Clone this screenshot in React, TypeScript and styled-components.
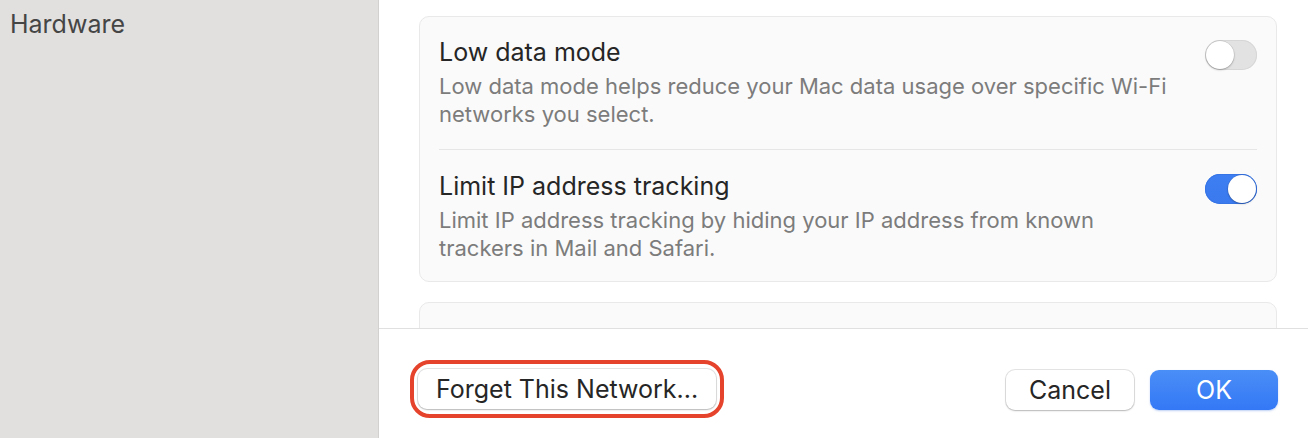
import styled, { createGlobalStyle } from "styled-components";

const GlobalStyle = createGlobalStyle`
  html, body {
    margin: 0;
    padding: 0;
    height: 438px;
    overflow: hidden;
    background: #ffffff;
    font-family: Inter, "Noto Sans", "Liberation Sans", sans-serif;
    -webkit-font-smoothing: antialiased;
  }
`;

const Window = styled.div`
  display: flex;
  width: 1308px;
  height: 438px;
`;

const Sidebar = styled.aside`
  width: 379px;
  flex-shrink: 0;
  background: #e1e0df;
  border-right: 1px solid #d2d1d0;
  padding: 9px 0 0 10px;
  box-sizing: border-box;
`;

const SidebarItem = styled.div`
  font-size: 25px;
  line-height: 30px;
  color: #454545;
`;

const Main = styled.main`
  flex: 1;
  display: flex;
  flex-direction: column;
  background: #ffffff;
  min-width: 0;
`;

const Scroll = styled.div`
  flex: 1;
  overflow: hidden;
  padding: 16px 31px 0 40px;
  display: flex;
  flex-direction: column;
  gap: 20px;
`;

const Card = styled.section`
  background: #fafafa;
  border: 1px solid #e9e9e9;
  border-radius: 10px;
  padding: 0 19px;
  flex-shrink: 0;
`;

const EmptyCard = styled(Card)`
  height: 60px;
`;

const Row = styled.div<{ $divider?: boolean }>`
  display: flex;
  align-items: flex-start;
  justify-content: space-between;
  gap: 24px;
  padding: ${(p) => (p.$divider ? "21px 0 19px" : "20px 0 21px")};
  border-top: ${(p) => (p.$divider ? "1px solid #e6e6e6" : "none")};
`;

const Texts = styled.div`
  display: flex;
  flex-direction: column;
  gap: 5px;
  max-width: 734px;
`;

const Title = styled.div`
  font-size: 25px;
  line-height: 30px;
  color: #262626;
`;

const Desc = styled.div`
  font-size: 22px;
  line-height: 28px;
  color: #7c7c7c;
`;

const Track = styled.div<{ $on?: boolean }>`
  position: relative;
  width: 52px;
  height: 30px;
  border-radius: 15px;
  flex-shrink: 0;
  margin-top: 3px;
  box-sizing: border-box;
  background: ${(p) => (p.$on ? "linear-gradient(180deg, #3d7ff2, #3a79ee)" : "#e2e2e2")};
  box-shadow: ${(p) => (p.$on ? "inset 0 0 0 1px #3774e4" : "inset 0 0 0 1px #d6d6d6")};
`;

const Knob = styled.div<{ $on?: boolean }>`
  position: absolute;
  top: 1px;
  left: ${(p) => (p.$on ? "23px" : "1px")};
  width: 28px;
  height: 28px;
  border-radius: 50%;
  background: #ffffff;
  box-shadow: 0 0 0 0.5px rgba(0, 0, 0, 0.12), 0 1px 2px rgba(0, 0, 0, 0.25);
`;

const Footer = styled.footer`
  height: 110px;
  border-top: 1px solid #e0e0e0;
  box-sizing: border-box;
  padding: 31px 30px 0 31px;
  display: flex;
  align-items: flex-start;
  justify-content: space-between;
`;

const Highlight = styled.div`
  border: 4px solid #e5432b;
  border-radius: 20px;
  padding: 5px 4px;
`;

const Button = styled.button<{ $primary?: boolean; $width?: number }>`
  height: 40px;
  width: ${(p) => (p.$width ? `${p.$width}px` : "auto")};
  padding: 0 18px;
  border-radius: 9px;
  border: none;
  font-family: inherit;
  font-size: 25px;
  color: ${(p) => (p.$primary ? "#ffffff" : "#262626")};
  background: ${(p) =>
    p.$primary ? "linear-gradient(180deg, #4a8ef7, #3478f6)" : "#ffffff"};
  box-shadow: ${(p) =>
    p.$primary
      ? "0 1px 2px rgba(40, 100, 220, 0.3)"
      : "0 0 0 1px rgba(0, 0, 0, 0.1), 0 1px 2px rgba(0, 0, 0, 0.2)"};
`;

const ButtonGroup = styled.div`
  display: flex;
  gap: 16px;
  margin-top: 10px;
`;

const Toggle = ({ on }: { on?: boolean }) => (
  <Track $on={on}>
    <Knob $on={on} />
  </Track>
);

export default function App() {
  return (
    <>
      <GlobalStyle />
      <Window>
        <Sidebar>
          <SidebarItem>Hardware</SidebarItem>
        </Sidebar>
        <Main>
          <Scroll>
            <Card>
              <Row>
                <Texts>
                  <Title>Low data mode</Title>
                  <Desc>
                    Low data mode helps reduce your Mac data usage over specific Wi-Fi
                    networks you select.
                  </Desc>
                </Texts>
                <Toggle />
              </Row>
              <Row $divider>
                <Texts>
                  <Title>Limit IP address tracking</Title>
                  <Desc>
                    Limit IP address tracking by hiding your IP address from known
                    trackers in Mail and Safari.
                  </Desc>
                </Texts>
                <Toggle on />
              </Row>
            </Card>
            <EmptyCard />
          </Scroll>
          <Footer>
            <Highlight>
              <Button>Forget This Network...</Button>
            </Highlight>
            <ButtonGroup>
              <Button $width={128}>Cancel</Button>
              <Button $primary $width={128}>
                OK
              </Button>
            </ButtonGroup>
          </Footer>
        </Main>
      </Window>
    </>
  );
}
